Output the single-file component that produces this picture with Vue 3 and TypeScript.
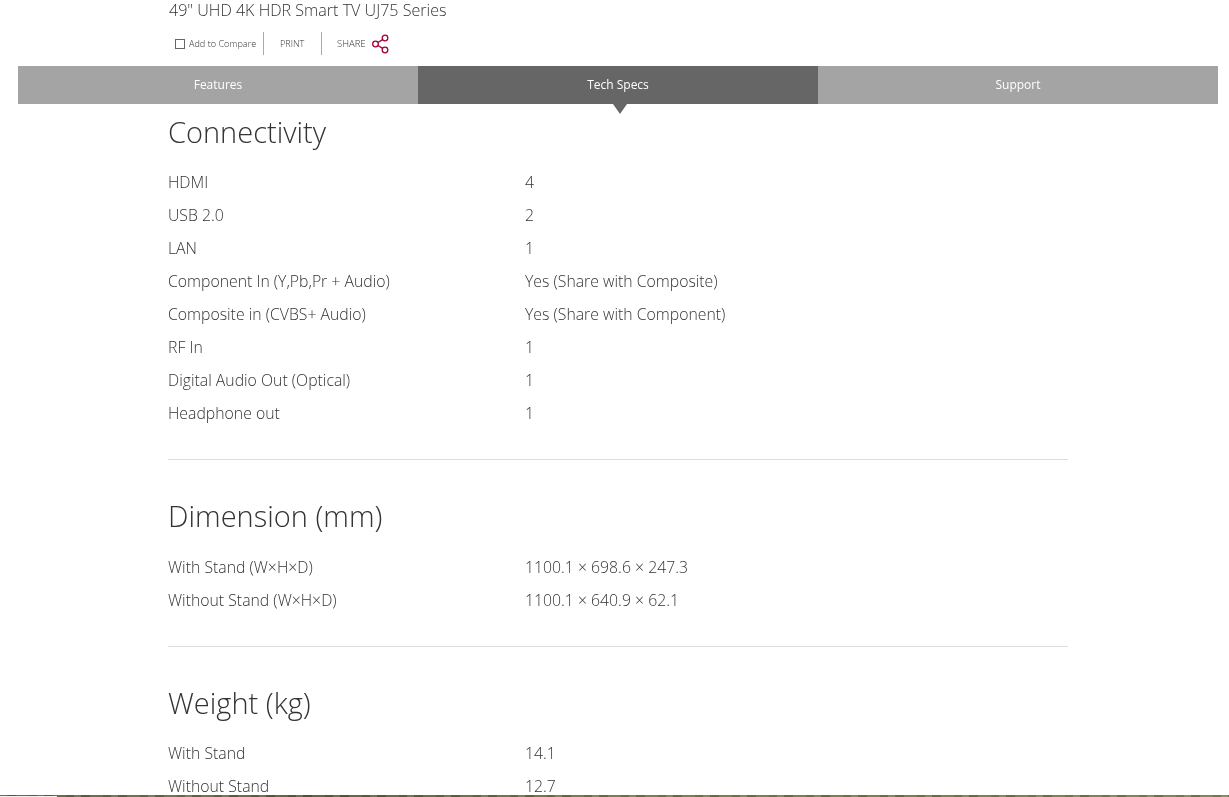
<script setup lang="ts">
interface Row { label: string; value: string }
interface Section { title: string; rows: Row[] }
const tabs = ['Features', 'Tech Specs', 'Support']
const sections: Section[] = [
  { title: 'Connectivity', rows: [
    { label: 'HDMI', value: '4' },
    { label: 'USB 2.0', value: '2' },
    { label: 'LAN', value: '1' },
    { label: 'Component In (Y,Pb,Pr + Audio)', value: 'Yes (Share with Composite)' },
    { label: 'Composite in (CVBS+ Audio)', value: 'Yes (Share with Component)' },
    { label: 'RF In', value: '1' },
    { label: 'Digital Audio Out (Optical)', value: '1' },
    { label: 'Headphone out', value: '1' },
  ] },
  { title: 'Dimension (mm)', rows: [
    { label: 'With Stand (W×H×D)', value: '1100.1 × 698.6 × 247.3' },
    { label: 'Without Stand (W×H×D)', value: '1100.1 × 640.9 × 62.1' },
  ] },
  { title: 'Weight (kg)', rows: [
    { label: 'With Stand', value: '14.1' },
    { label: 'Without Stand', value: '12.7' },
  ] },
]
</script>

<template>
  <div class="page">
    <header class="head">
      <h1 class="model">49" UHD 4K HDR Smart TV UJ75 Series</h1>
      <div class="actions">
        <span class="action compare"><i class="box"></i>Add to Compare</span>
        <span class="action print">PRINT</span>
        <span class="action share">SHARE
          <svg width="20" height="20" viewBox="0 0 20 20" fill="none" stroke="#a50034" stroke-width="1.3">
            <circle cx="15" cy="4" r="2.8" />
            <circle cx="15" cy="16" r="2.8" />
            <circle cx="5.5" cy="10" r="2.8" />
            <path d="M8 8.5 12.6 5.6M8 11.5 12.6 14.4" />
          </svg>
        </span>
      </div>
    </header>
    <nav class="tabs">
      <div v-for="(t, i) in tabs" :key="t" class="tab" :class="{ active: i === 1 }">{{ t }}</div>
    </nav>
    <main class="specs">
      <section v-for="s in sections" :key="s.title" class="section">
        <h2 class="title">{{ s.title }}</h2>
        <div v-for="r in s.rows" :key="r.label" class="row">
          <span class="label">{{ r.label }}</span>
          <span class="value">{{ r.value }}</span>
        </div>
      </section>
    </main>
    <div class="strip"></div>
  </div>
</template>

<style>
html, body { margin: 0; background: #fff; overflow: hidden; }
</style>

<style scoped>
.page { position: relative; height: 797px; overflow: hidden; font-family: "Open Sans", Lato, sans-serif; font-weight: 300; color: #333; will-change: opacity; }
.head { padding: 0 0 0 169px; height: 66px; box-sizing: border-box; }
.model { margin: 0; font-size: 16.1px; font-weight: 300; line-height: 21px; color: #333; white-space: nowrap; }
.actions { display: flex; align-items: center; margin-top: 11px; height: 23px; font-size: 9.1px; color: #333; }
.action { display: flex; align-items: center; height: 23px; white-space: nowrap; }
.compare { padding-left: 6px; width: 95px; box-sizing: border-box; border-right: 1px solid #aaa; }
.box { width: 8px; height: 8px; border: 1px solid #666; margin-right: 4px; flex: none; }
.print { width: 58px; padding-left: 16px; box-sizing: border-box; border-right: 1px solid #aaa; }
.share { padding-left: 15px; gap: 4px; font-size: 9.5px; }
.tabs { display: flex; margin: 0 11px 0 18px; height: 38px; }
.tab { flex: 1; display: flex; align-items: center; justify-content: center; padding-bottom: 2px; box-sizing: border-box; background: #a4a4a4; color: #fff; font-size: 12px; font-weight: 400; }
.tab.active { position: relative; background: #666; }
.tab.active::after { content: ""; position: absolute; left: 195px; top: 100%; border-style: solid; border-width: 10px 7px 0; border-color: #666 transparent transparent; }
.specs { width: 900px; margin-left: 168px; padding-top: 11px; }
.section { padding-bottom: 30px; margin-bottom: 39px; border-bottom: 1px solid #ddd; }
.section:last-child { border-bottom: 0; }
.title { margin: 0 0 16px; font-size: 29px; line-height: 34px; font-weight: 300; color: #333; }
.section:nth-child(2) .title { margin-bottom: 17px; }
.row { display: flex; height: 33px; align-items: center; font-size: 15.8px; }
.label { width: 357px; }
.strip { position: absolute; left: 0; right: 0; bottom: 0; height: 2px; background:
  linear-gradient(90deg, #f2f2ea 0, #f2f2ea 57px, transparent 57px) 0 100% / 100% 1px no-repeat,
  repeating-linear-gradient(90deg, rgba(255,255,255,.12) 0 7px, rgba(0,0,0,.1) 7px 16px, rgba(255,255,255,.06) 16px 29px, rgba(0,0,0,.06) 29px 37px),
  linear-gradient(90deg, #59603a 0, #6a6f45 15%, #565c33 25%, #70793f 50%, #6f7a3e 75%, #7a8048 100%); }
</style>
